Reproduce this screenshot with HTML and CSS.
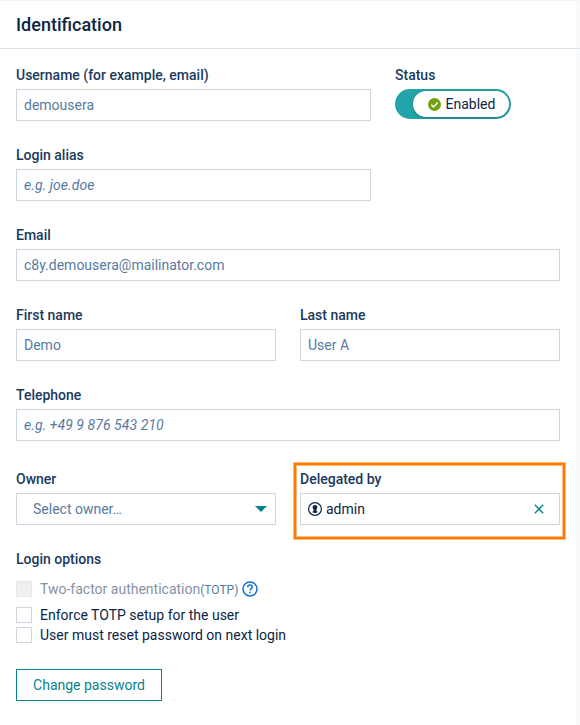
FILE: index.html
```html
<!DOCTYPE html>
<html lang="en">
<head>
<meta charset="utf-8">
<title>Identification</title>
<link rel="stylesheet" href="styles.css">
</head>
<body>
<main class="card">
  <header class="card-header"><h1>Identification</h1></header>
  <form class="form">
    <div class="row row-status">
      <div class="field">
        <label>Username (for example, email)</label>
        <div class="control">demousera</div>
      </div>
      <div class="field">
        <label>Status</label>
        <div class="switch">
          <div class="switch-thumb">
            <svg width="13" height="13" viewBox="0 0 13 13"><circle cx="6.5" cy="6.5" r="6.5" fill="#75a010"/><path d="M3.3 6.8l2.2 2.2 4.2-4.4" fill="none" stroke="#fff" stroke-width="1.4"/></svg>
            <span>Enabled</span>
          </div>
        </div>
      </div>
    </div>
    <div class="row row-status">
      <div class="field">
        <label>Login alias</label>
        <div class="control placeholder">e.g. joe.doe</div>
      </div>
    </div>
    <div class="field">
      <label>Email</label>
      <div class="control">c8y.demousera@mailinator.com</div>
    </div>
    <div class="row row-half">
      <div class="field">
        <label>First name</label>
        <div class="control">Demo</div>
      </div>
      <div class="field">
        <label>Last name</label>
        <div class="control">User A</div>
      </div>
    </div>
    <div class="field">
      <label>Telephone</label>
      <div class="control placeholder">e.g. +49 9 876 543 210</div>
    </div>
    <div class="row row-half row-owner">
      <div class="field">
        <label>Owner</label>
        <div class="control select">
          <span>Select owner…</span>
          <svg width="12" height="6" viewBox="0 0 12 6"><path d="M0 0h12L6 6z" fill="#07838f"/></svg>
        </div>
      </div>
      <div class="field delegated">
        <label>Delegated by</label>
        <div class="control chosen">
          <svg width="14" height="14" viewBox="0 0 14 14"><circle cx="7" cy="7" r="6.4" fill="none" stroke="#0b2545" stroke-width="1.2"/><path d="M7 3c1.500 0 2.300.9 2.300 2.200 0 1.200-.4 2.100-.9 2.600v1.200l1.200.7v.6c-.7.5-1.600.8-2.600.8s-1.900-.3-2.600-.8v-.6l1.200-.7V7.800c-.5-.5-.9-1.400-.9-2.600C4.700 3.900 5.500 3 7 3z" fill="#0b2545"/></svg>
          <span>admin</span>
          <svg class="clear" width="10" height="10" viewBox="0 0 10 10"><path d="M.8.8l8.400 8.400M9.200.8L.8 9.200" fill="none" stroke="#07838f" stroke-width="1.400"/></svg>
        </div>
      </div>
    </div>
    <div class="options">
      <label>Login options</label>
      <div class="option disabled">
        <span class="box"></span>
        <span>Two-factor authentication<small>(TOTP)</small></span>
        <svg width="16" height="16" viewBox="0 0 16 16" fill="none" stroke="#1270d0" stroke-width="1.5"><circle cx="8" cy="8" r="7"/><path d="M5.700 6.300c0-1.400 1-2.200 2.300-2.200s2.300.8 2.300 2c0 1.500-2.200 1.700-2.200 3.500"/><path d="M8.100 10.700v1.500"/></svg>
      </div>
      <div class="option"><span class="box"></span><span>Enforce TOTP setup for the user</span></div>
      <div class="option"><span class="box"></span><span>User must reset password on next login</span></div>
    </div>
    <button class="button" type="button">Change password</button>
  </form>
</main>
</body>
</html>
```
FILE: styles.css
```css
* { box-sizing: border-box; }
body {
  margin: 0;
  height: 725px;
  overflow: hidden;
  background: #f8f9fb;
  border-top: 1px solid #f4f4f5;
  font: 14px/20px Roboto, "Liberation Sans", sans-serif;
  color: #0b2545;
}
svg { display: block; flex: none; }
.card { width: 576px; height: 724px; background: #fff; }
.card-header {
  width: 580px;
  height: 48px;
  padding: 12px 16px;
  border-bottom: 1px solid #dfe2ea;
  background: linear-gradient(to right, #fff 576px, #f8f9fb 576px);
}
h1 { margin: 0; font-size: 18px; line-height: 24px; font-weight: 500; color: #0b2545; }
.form { padding: 16px; display: flex; flex-direction: column; gap: 24px; }
.row { display: grid; column-gap: 24px; }
.row-status { grid-template-columns: 355px 1fr; }
.row-half { grid-template-columns: 260px 260px; }
.row-owner { margin-top: 4px; }
.field label, .options label { display: block; font-weight: 500; color: #1a3a5f; }
.field label { margin-bottom: 4px; }
.field { position: relative; }
.form > .field, .form > .row-half { width: 544px; }
.control {
  height: 32px;
  padding: 5px 7px;
  border: 1px solid #d0d6df;
  background: #fff;
  color: #587a9f;
}
.placeholder { font-style: italic; letter-spacing: .06px; }
.select {
  display: flex;
  align-items: center;
  justify-content: space-between;
  padding: 0 8px 0 16px;
}
.chosen { display: flex; align-items: center; gap: 4px; color: #0b2545; }
.clear { margin: 0 8px 0 auto; }
.delegated::after {
  content: "";
  position: absolute;
  inset: -6px -5px -14px -6px;
  border: 2px solid #ff7800;
  box-shadow: 0 0 0 1px rgba(255, 120, 0, .5), inset 0 0 0 1px rgba(255, 120, 0, .5);
}
.switch {
  width: 116px;
  height: 30px;
  padding: 2px 2px 2px 18px;
  border-radius: 15px;
  background: #22a5aa;
}
.switch-thumb {
  display: flex;
  align-items: center;
  gap: 4.5px;
  height: 26px;
  padding-left: 15px;
  border-radius: 13px;
  background: #fff;
  color: #0b2545;
  box-shadow: 0 1px 3px rgba(0, 50, 60, .4);
}
.options { display: flex; flex-direction: column; }
.option { display: flex; align-items: center; height: 20px; }
.option .box { width: 16px; height: 16px; margin-right: 8px; border: 1px solid #d0d6df; }
.option.disabled { margin: 10px 0 6px; color: #8592a5; }
.disabled .box { background: #f0f0f1; border-color: #e4e7eb; }
.disabled small { font-size: 12px; color: #587a9f; }
.disabled svg { margin-left: 4px; }
.button {
  align-self: flex-start;
  width: 146px;
  height: 32px;
  padding: 0;
  border: 1px solid #07838f;
  background: #fff;
  font: inherit;
  color: #07838f;
}
```
